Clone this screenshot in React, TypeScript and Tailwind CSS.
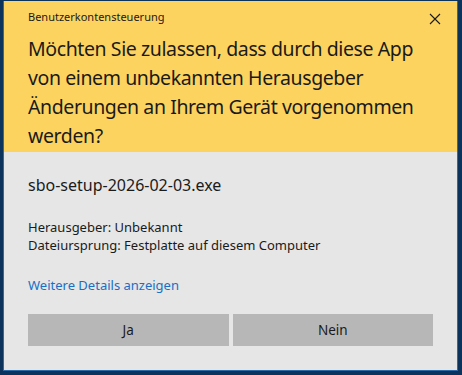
export default function App() {
  return (
    <div
      className="w-[462px] h-[375px] bg-[#0b335c] border-l-[3px] border-r-[4px] border-b-[4px] border-t border-[#0b335c] flex flex-col"
      style={{ fontFamily: '"Segoe UI", "Noto Sans", sans-serif' }}
    >
      <div className="flex-1 flex flex-col border-l border-r border-b border-[#2c6aa8]">
        <div className="bg-[#fdd35f] h-[151px] pl-[24px] pr-[14px] pt-[8px] text-[#1a1a1a]">
          <div className="flex items-start justify-between">
            <div className="text-[11px] leading-[16px]">Benutzerkontensteuerung</div>
            <svg width="12" height="12" viewBox="0 0 12 12" className="mt-[4px] mr-[2px]">
              <path d="M1 1L11 11M11 1L1 11" stroke="#1a1a1a" strokeWidth="1.1" />
            </svg>
          </div>
          <div className="mt-[9px] text-[19.5px] leading-[29px] tracking-[-0.4px]">
            Möchten Sie zulassen, dass durch diese App von einem unbekannten Herausgeber Änderungen an Ihrem Gerät vorgenommen werden?
          </div>
        </div>
        <div className="flex-1 bg-[#e6e6e6] px-[24px] pt-[21px] text-[#1a1a1a]">
          <div className="text-[16px] leading-[24px]">sbo-setup-2026-02-03.exe</div>
          <div className="mt-[21px] text-[13px] leading-[18px]">
            <div>Herausgeber: Unbekannt</div>
            <div>Dateiursprung: Festplatte auf diesem Computer</div>
          </div>
          <div className="mt-[22px] text-[13px] leading-[18px] text-[#1a6fc4]">Weitere Details anzeigen</div>
          <div className="mt-[20px] grid grid-cols-2 gap-[4px]">
            <button className="h-[32px] bg-[#b7b7b7] text-[13.5px] text-[#1a1a1a]">Ja</button>
            <button className="h-[32px] bg-[#b7b7b7] text-[13.5px] text-[#1a1a1a]">Nein</button>
          </div>
        </div>
      </div>
    </div>
  );
}
